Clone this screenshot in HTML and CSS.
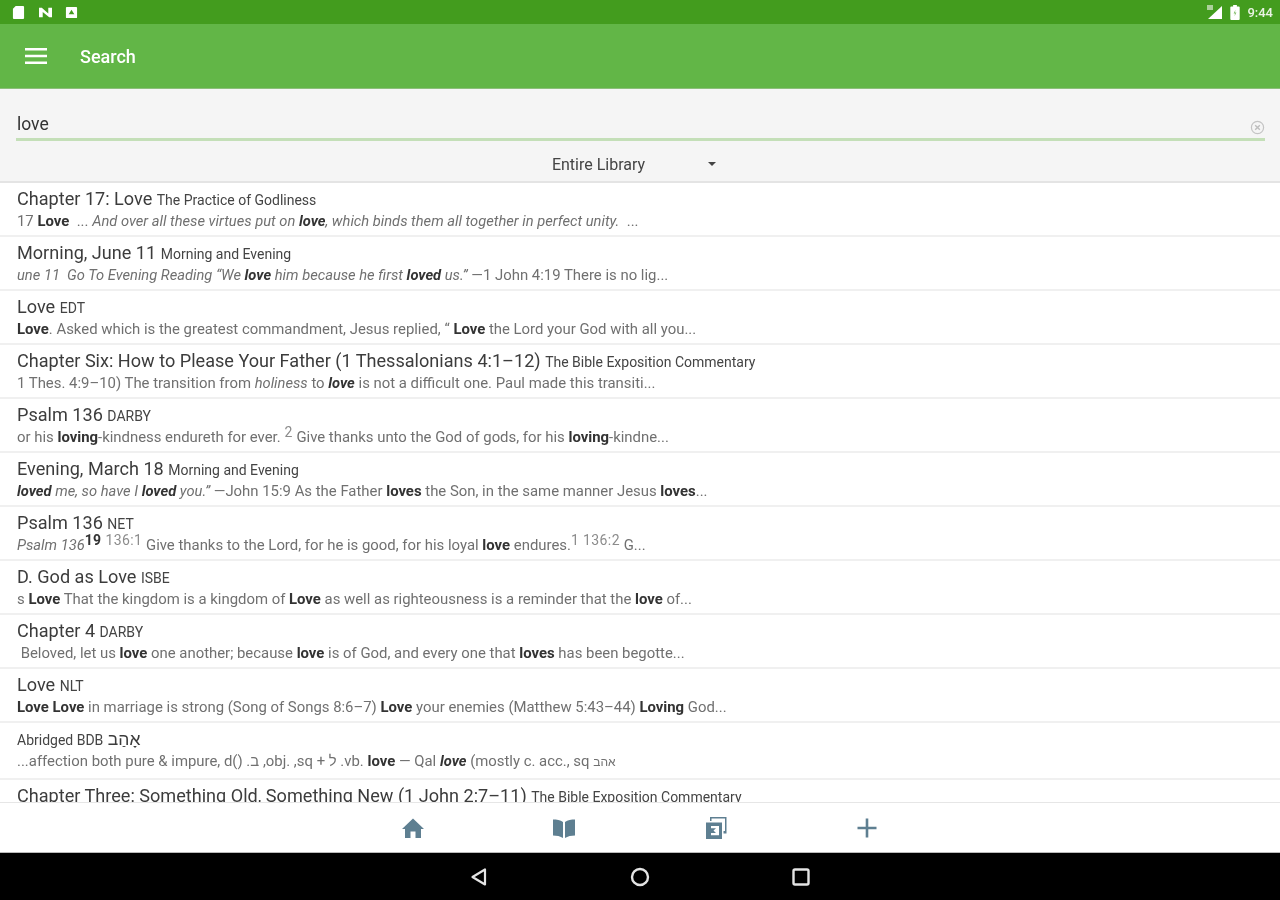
FILE: index.html
```html
<!DOCTYPE html>
<html lang="en">
<head>
<meta charset="utf-8">
<title>Search</title>
<link rel="stylesheet" href="styles.css">
</head>
<body>
<div class="screen">
  <header class="status">
    <div class="status-left">
      <svg class="si" viewBox="0 0 14 16" width="13" height="15"><path d="M4 1h8a1 1 0 0 1 1 1v12a1 1 0 0 1-1 1H2a1 1 0 0 1-1-1V4z" fill="#fff"/></svg>
      <svg class="si" viewBox="0 0 16 14" width="15" height="13"><path d="M1 2h3l7 6V2h4v10h-3L5 6.500V12H1z" fill="#fff"/></svg>
      <svg class="si" viewBox="0 0 14 14" width="13" height="13"><path fill-rule="evenodd" d="M2 1h10a1 1 0 0 1 1 1v10a1 1 0 0 1-1 1H2a1 1 0 0 1-1-1V2a1 1 0 0 1 1-1zm5 3L4 9h6z" fill="#fff"/></svg>
    </div>
    <div class="status-right">
      <svg viewBox="0 0 17 16" width="17" height="16"><path d="M16 2v13H2z" fill="#fff"/><path d="M1 1h6v5H1z" fill="#d8e8d0" opacity=".7"/></svg>
      <svg viewBox="0 0 10 16" width="10" height="15"><path d="M3 0h4v1.500h2a1 1 0 0 1 1 1V15a1 1 0 0 1-1 1H1a1 1 0 0 1-1-1V2.500a1 1 0 0 1 1-1h2z" fill="#fff"/><path d="M5.500 5L3.500 9h1.500l-.5 3 2-4H5z" fill="#7fbb66"/></svg>
      <span class="clock">9:44</span>
    </div>
  </header>

  <div class="appbar">
    <svg class="menu" viewBox="0 0 22 18" width="22" height="18"><path d="M0 1h22v2.400H0zM0 7.800h22v2.400H0zM0 14.600h22V17H0z" fill="#fff"/></svg>
    <span class="appbar-title">Search</span>
  </div>

  <div class="search">
    <div class="search-field">
      <span class="query">love</span>
      <svg viewBox="0 0 16 16" width="15" height="15"><circle cx="8" cy="8" r="6.500" fill="none" stroke="#c4c4c4" stroke-width="1.300"/><path d="M5.500 5.500l5 5M10.500 5.500l-5 5" stroke="#bdbdbd" stroke-width="1.500"/></svg>
    </div>
    <div class="scope">
      <span class="scope-label">Entire Library</span>
      <span class="caret"></span>
    </div>
  </div>

  <main class="results">
    <article class="row">
      <h2 class="title">Chapter 17: Love <small>The Practice of Godliness</small></h2>
      <p class="snippet">17 <b>Love</b> &nbsp;... <i>And over all these virtues put on <b>love</b>, which binds them all together in perfect unity.</i> &nbsp;...</p>
    </article>
    <article class="row">
      <h2 class="title">Morning, June 11 <small>Morning and Evening</small></h2>
      <p class="snippet"><i>une 11 &nbsp;Go To Evening Reading “We <b>love</b> him because he first <b>loved</b> us.”</i> —1 John 4:19 There is no lig...</p>
    </article>
    <article class="row">
      <h2 class="title">Love <small>EDT</small></h2>
      <p class="snippet"><b>Love</b>. Asked which is the greatest commandment, Jesus replied, “ <b>Love</b> the Lord your God with all you...</p>
    </article>
    <article class="row">
      <h2 class="title">Chapter Six: How to Please Your Father (1 Thessalonians 4:1–12) <small>The Bible Exposition Commentary</small></h2>
      <p class="snippet">1 Thes. 4:9–10) The transition from <i>holiness</i> to <b><i>love</i></b> is not a difficult one. Paul made this transiti...</p>
    </article>
    <article class="row">
      <h2 class="title">Psalm 136 <small>DARBY</small></h2>
      <p class="snippet">or his <b>loving</b>-kindness endureth for ever. <sup>2</sup> Give thanks unto the God of gods, for his <b>loving</b>-kindne...</p>
    </article>
    <article class="row">
      <h2 class="title">Evening, March 18 <small>Morning and Evening</small></h2>
      <p class="snippet"><i><b>loved</b> me, so have I <b>loved</b> you.”</i> —John 15:9 As the Father <b>loves</b> the Son, in the same manner Jesus <b>loves</b>...</p>
    </article>
    <article class="row">
      <h2 class="title">Psalm 136 <small>NET</small></h2>
      <p class="snippet"><i>Psalm 136</i><sup><b>19</b> 136:1</sup> Give thanks to the Lord, for he is good, for his loyal <b>love</b> endures.<sup>1 136:2</sup> G...</p>
    </article>
    <article class="row">
      <h2 class="title">D. God as Love <small>ISBE</small></h2>
      <p class="snippet">s <b>Love</b> That the kingdom is a kingdom of <b>Love</b> as well as righteousness is a reminder that the <b>love</b> of...</p>
    </article>
    <article class="row">
      <h2 class="title">Chapter 4 <small>DARBY</small></h2>
      <p class="snippet">&nbsp;Beloved, let us <b>love</b> one another; because <b>love</b> is of God, and every one that <b>loves</b> has been begotte...</p>
    </article>
    <article class="row">
      <h2 class="title">Love <small>NLT</small></h2>
      <p class="snippet"><b>Love</b> <b>Love</b> in marriage is strong (Song of Songs 8:6–7) <b>Love</b> your enemies (Matthew 5:43–44) <b>Loving</b> God...</p>
    </article>
    <article class="row row-tall">
      <h2 class="title"><small>Abridged BDB</small> <span class="heb" dir="rtl">אָהַב</span></h2>
      <p class="snippet">...affection both pure &amp; impure, d() .ב ,obj. ,sq + ל .vb. <b>love</b> — Qal <b><i>love</i></b> (mostly c. acc., sq <span class="heb-s" dir="rtl">אהב</span></p>
    </article>
    <article class="row">
      <h2 class="title">Chapter Three: Something Old, Something New (1 John 2:7–11) <small>The Bible Exposition Commentary</small></h2>
    </article>
  </main>

  <nav class="tabs">
    <div class="tabs-inner">
      <svg viewBox="0 0 24 24" width="24" height="24"><path d="M12 2.500L1 13h3v9h5.500v-6.500h5V22H20v-9h3z" fill="#5e7f91"/></svg>
      <svg viewBox="0 0 24 24" width="24" height="24"><path d="M1 3.500c3.500 0 7.500.5 10 2.500v16c-2.500-1.700-6.500-2.500-10-2.500zM23 3.500c-3.500 0-7.500.5-10 2.500v16c2.500-1.700 6.500-2.500 10-2.500z" fill="#5e7f91"/></svg>
      <svg viewBox="0 0 24 24" width="24" height="24"><path fill-rule="evenodd" d="M2 6.500h16V23H2zM7 10v2.300h5l-2.500 2.200L12 17H7v2.200h8v-9.200z" fill="#5e7f91"/><path d="M6 5V1h16.500v16.500H19.500V15H21V2.500H7.500V5z" fill="#5e7f91"/></svg>
      <svg viewBox="0 0 24 24" width="24" height="24"><path d="M10.700 2.500h2.600v8.200h8.200v2.600h-8.200v8.200h-2.600v-8.200H2.500v-2.600h8.200z" fill="#5e7f91"/></svg>
    </div>
  </nav>

  <footer class="sysnav">
    <div class="sysnav-inner">
      <svg viewBox="0 0 20 20" width="20" height="20"><path d="M16 2.500v15L3.500 10z" fill="none" stroke="#e4e4e4" stroke-width="2.200" stroke-linejoin="round"/></svg>
      <svg viewBox="0 0 20 20" width="20" height="20"><circle cx="10" cy="10" r="8" fill="none" stroke="#e4e4e4" stroke-width="2.400"/></svg>
      <svg viewBox="0 0 20 20" width="20" height="20"><rect x="2.500" y="2.500" width="15" height="15" rx="1.500" fill="none" stroke="#e4e4e4" stroke-width="2.400"/></svg>
    </div>
  </footer>
</div>
</body>
</html>
```

FILE: styles.css
```css
* { box-sizing: border-box; }
html, body { margin: 0; padding: 0; background: #fff; }
body { font-family: Roboto, "Noto Sans", "Liberation Sans", sans-serif; }

.screen {
  width: 1280px;
  height: 900px;
  display: flex;
  flex-direction: column;
  overflow: hidden;
  filter: blur(0.7px);
}

.status {
  flex: 0 0 24px;
  background: #439c1e;
  display: flex;
  justify-content: space-between;
  align-items: center;
  padding: 0 7px 0 12px;
}
.status-left, .status-right { display: flex; align-items: center; }
.status-left { gap: 12.500px; }
.status-right { gap: 7px; }
.clock { color: #eaf3e4; font-size: 13px; font-weight: 500; }

.appbar {
  flex: 0 0 65px;
  background: #62b647;
  border-bottom: 1px solid #8cbf7a;
  display: flex;
  align-items: center;
  gap: 33px;
  padding-left: 25px;
}
.appbar-title { color: #fff; font-size: 18px; font-weight: 500; line-height: 24px; position: relative; top: 1px; }

.search {
  flex: 0 0 94px;
  background: #f5f5f5;
  border-bottom: 2px solid #e4e4e4;
  padding: 0 15px 0 16px;
}
.search-field {
  height: 52px;
  display: flex;
  justify-content: space-between;
  align-items: flex-end;
  padding: 0 0 3px 1px;
  border-bottom: 3px solid #c4dfb8;
}
.query { font-size: 17.500px; color: #333; line-height: 22px; }
.scope {
  height: 40px;
  display: flex;
  align-items: center;
  justify-content: center;
  gap: 63px;
  padding: 6px 13px 0 0;
}
.scope-label { font-size: 16px; color: #444; }
.caret {
  width: 0; height: 0;
  border-left: 4.500px solid transparent;
  border-right: 4.500px solid transparent;
  border-top: 4.500px solid #444;
}

.results { flex: 1 1 0; min-height: 0; overflow: hidden; background: #fff; }
.row {
  height: 54px;
  padding: 4px 0 0 17px;
  border-bottom: 2px solid #f0f0f0;
  overflow: hidden;
  white-space: nowrap;
}
.row-tall { height: 57px; padding-top: 4px; }
.title {
  margin: 0;
  font-size: 18.100px;
  line-height: 24px;
  font-weight: 400;
  color: #3c3c3c;
}
.title small { font-size: 14px; color: #444; }
.heb { font-family: "Liberation Sans", "DejaVu Sans", sans-serif; font-size: 17.500px; }
.heb-s { font-family: "Liberation Sans", "DejaVu Sans", sans-serif; font-size: 12px; }
.snippet {
  margin: 0;
  font-size: 14.900px;
  line-height: 18px;
  color: #707070;
}
.snippet i { font-size: 14.700px; }
.snippet b { font-weight: 700; color: #333; }
.snippet sup {
  font-size: 14px;
  line-height: 0;
  vertical-align: 5px;
  letter-spacing: 0.400px;
  color: #8c8c8c;
}

.tabs {
  flex: 0 0 51px;
  background: #fff;
  border-top: 1px solid #e6e6e6;
  border-bottom: 1px solid #bbb;
  display: flex;
  justify-content: center;
}
.tabs-inner {
  width: 606px;
  display: grid;
  grid-template-columns: repeat(4, 1fr);
  justify-items: center;
  align-items: center;
}
.sysnav {
  flex: 0 0 47px;
  background: #000;
  display: flex;
  justify-content: center;
}
.sysnav-inner {
  width: 483px;
  display: grid;
  grid-template-columns: repeat(3, 1fr);
  justify-items: center;
  align-items: center;
}
```
